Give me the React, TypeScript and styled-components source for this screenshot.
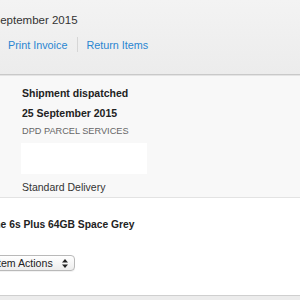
import React from "react";
import styled, { createGlobalStyle } from "styled-components";

const Global = createGlobalStyle`
  html, body { margin: 0; padding: 0; background: #ffffff; }
  body { font-family: "Liberation Sans", Arial, sans-serif; overflow: hidden; }
`;

const Page = styled.div`
  width: 300px;
  height: 300px;
  overflow: hidden;
  display: flex;
  flex-direction: column;
`;

const Header = styled.header`
  height: 75px;
  box-sizing: border-box;
  padding-top: 13px;
  background: linear-gradient(#f3f3f3, #ececec);
  border-bottom: 1px solid #c9c9c9;
  box-shadow: 0 1px 0 #e4e4e4;
  display: flex;
  flex-direction: column;
`;

const Title = styled.h1`
  margin: 0 0 0 -7.5px;
  font-size: 11.5px;
  line-height: 14px;
  font-weight: normal;
  color: #333;
  white-space: nowrap;
`;

const LinkRow = styled.nav`
  margin-top: 10px;
  padding-left: 8px;
  display: flex;
  align-items: center;
`;

const Link = styled.a`
  font-size: 10.8px;
  line-height: 14px;
  color: #2a86d1;
  text-decoration: none;
  white-space: nowrap;
`;

const Divider = styled.span`
  width: 1px;
  height: 15px;
  background: #d6d6d6;
  margin: 0 8px 0 10px;
`;

const Shipment = styled.section`
  margin-top: 1px;
  padding: 10px 0 3px 22px;
  background: #f8f8f8;
  border-bottom: 1px solid #e3e3e3;
  display: flex;
  flex-direction: column;
`;

const Strong = styled.div<{ $gap?: number }>`
  margin-top: ${(p) => p.$gap ?? 0}px;
  font-size: 10.5px;
  line-height: 14px;
  font-weight: bold;
  color: #222;
  white-space: nowrap;
`;

const Carrier = styled.div`
  margin-top: 4px;
  font-size: 9.2px;
  line-height: 14px;
  color: #666;
  white-space: nowrap;
`;

const TrackingBox = styled.div`
  margin-top: 5px;
  margin-left: -1px;
  width: 126px;
  height: 31px;
  background: #ffffff;
`;

const Service = styled.div`
  margin-top: 6px;
  font-size: 10.5px;
  line-height: 14px;
  color: #333;
  white-space: nowrap;
`;

const Product = styled.section`
  flex: 1;
  padding-top: 20px;
  display: flex;
  flex-direction: column;
  align-items: flex-start;
`;

const ProductName = styled.div`
  margin-left: -28px;
  font-size: 10.3px;
  line-height: 14px;
  font-weight: bold;
  color: #222;
  white-space: nowrap;
`;

const Select = styled.div`
  margin-top: 23px;
  margin-left: -14px;
  height: 16px;
  box-sizing: border-box;
  padding: 0 6px 0 8px;
  display: flex;
  align-items: center;
  gap: 9px;
  border: 1px solid #b9b9b9;
  border-radius: 4px;
  background: linear-gradient(#ffffff, #ededed);
  box-shadow: 0 1px 0 rgba(0, 0, 0, 0.05);
  font-size: 10.6px;
  color: #222;
  white-space: nowrap;
`;

const Footer = styled.footer`
  height: 4px;
  border-top: 1px solid #cfcfcf;
  background: #ececec;
`;

const Arrows = () => (
  <svg width="6" height="9" viewBox="0 0 6 9">
    <path d="M3 0 L6 3.5 H0 Z" fill="#222" />
    <path d="M3 9 L6 5.5 H0 Z" fill="#222" />
  </svg>
);

export default function App() {
  return (
    <Page>
      <Global />
      <Header>
        <Title>September 2015</Title>
        <LinkRow>
          <Link href="#">Print Invoice</Link>
          <Divider />
          <Link href="#">Return Items</Link>
        </LinkRow>
      </Header>
      <Shipment>
        <Strong>Shipment dispatched</Strong>
        <Strong $gap={6}>25 September 2015</Strong>
        <Carrier>DPD PARCEL SERVICES</Carrier>
        <TrackingBox />
        <Service>Standard Delivery</Service>
      </Shipment>
      <Product>
        <ProductName>iPhone 6s Plus 64GB Space Grey</ProductName>
        <Select>
          <span>Item Actions</span>
          <Arrows />
        </Select>
      </Product>
      <Footer />
    </Page>
  );
}
